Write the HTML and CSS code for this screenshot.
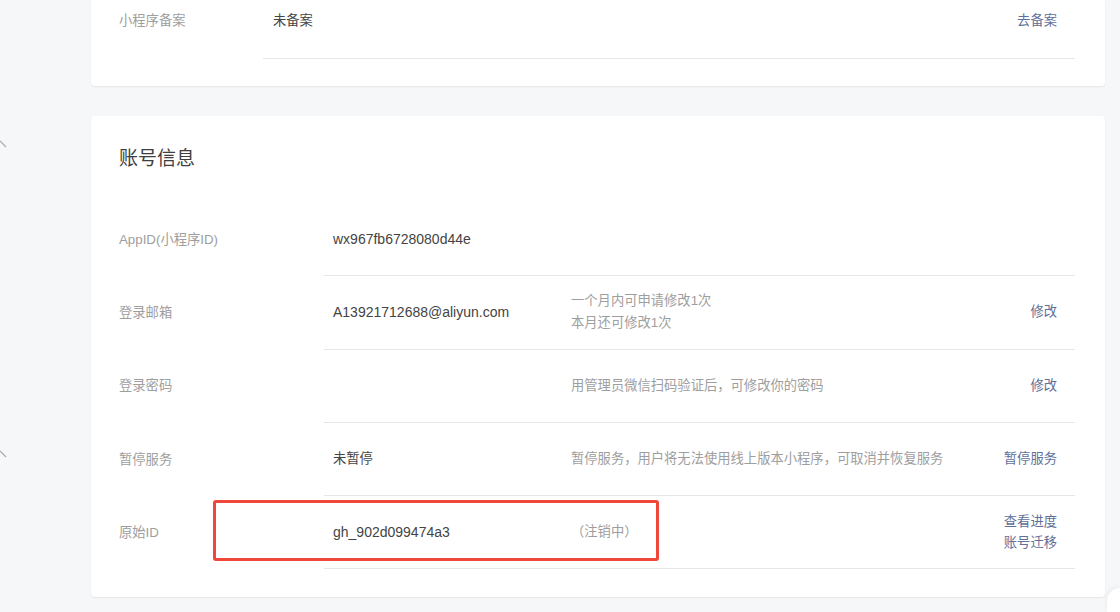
FILE: index.html
```html
<!DOCTYPE html>
<html lang="zh-CN">
<head>
<meta charset="utf-8">
<title>账号信息</title>
<link rel="stylesheet" href="styles.css">
</head>
<body>
<div class="page">
  <section class="card card-top">
    <div class="row">
      <div class="label label-narrow">小程序备案</div>
      <div class="content content-top">
        <div class="value value-cjk">未备案</div>
        <div class="desc"></div>
        <a class="action">去备案</a>
      </div>
    </div>
  </section>

  <section class="card card-main">
    <h2 class="title">账号信息</h2>
    <div class="row">
      <div class="label">AppID(小程序ID)</div>
      <div class="content">
        <div class="value">wx967fb6728080d44e</div>
        <div class="desc"></div>
        <div class="action"></div>
      </div>
    </div>
    <div class="row">
      <div class="label">登录邮箱</div>
      <div class="content">
        <div class="value">A13921712688@aliyun.com</div>
        <div class="desc">一个月内可申请修改1次<br>本月还可修改1次</div>
        <a class="action">修改</a>
      </div>
    </div>
    <div class="row">
      <div class="label">登录密码</div>
      <div class="content">
        <div class="value"></div>
        <div class="desc">用管理员微信扫码验证后，可修改你的密码</div>
        <a class="action">修改</a>
      </div>
    </div>
    <div class="row">
      <div class="label">暂停服务</div>
      <div class="content">
        <div class="value value-cjk">未暂停</div>
        <div class="desc">暂停服务，用户将无法使用线上版本小程序，可取消并恢复服务</div>
        <a class="action">暂停服务</a>
      </div>
    </div>
    <div class="row">
      <div class="label">原始ID</div>
      <div class="content">
        <div class="value">gh_902d099474a3</div>
        <div class="desc desc-status">（注销中）</div>
        <div class="action action-stack"><a>查看进度</a><a>账号迁移</a></div>
      </div>
    </div>
  </section>
</div>

<div class="highlight"></div>
<svg class="chev chev-1" width="8" height="10" viewBox="0 0 8 10"><path d="M0 1 L6 7" stroke="#a9abb0" stroke-width="1.2" fill="none"/></svg>
<svg class="chev chev-2" width="8" height="10" viewBox="0 0 8 10"><path d="M0 1 L6 7" stroke="#a9abb0" stroke-width="1.2" fill="none"/></svg>
<div class="float-btn"></div>
</body>
</html>
```

FILE: styles.css
```css
html, body {
  margin: 0;
  padding: 0;
}
body {
  width: 1120px;
  height: 612px;
  overflow: hidden;
  background: #f6f7f9;
  font-family: "Liberation Sans", "Noto Sans CJK SC", sans-serif;
  color: #353535;
  position: relative;
}
.page {
  padding-left: 91px;
  width: 1014px;
}
.card {
  background: #fff;
  border-radius: 4px;
  box-shadow: 0 1px 2px rgba(0, 0, 0, 0.07);
  box-sizing: border-box;
  width: 1014px;
  padding: 0 30px 0 28px;
}
.card-top {
  border-radius: 0 0 4px 4px;
  padding-bottom: 27px;
}
.card-main {
  margin-top: 30px;
  padding-top: 30px;
  padding-bottom: 28px;
}
.title {
  margin: 0 0 31px 0;
  font-size: 19px;
  line-height: 26px;
  font-weight: 400;
  color: #3e3e3e;
}
.row {
  display: flex;
  align-items: center;
}
.label {
  width: 205px;
  flex: none;
  font-size: 13.3px;
  line-height: 22px;
  color: #9e9e9e;
}
.label-narrow {
  width: 144px;
  align-self: flex-start;
  padding-top: 10px;
}
.content {
  flex: 1;
  display: flex;
  align-items: center;
  height: 72.3px;
  border-bottom: 1px solid #e7e7eb;
  padding: 0 18px 0 9px;
}
.content-top {
  height: auto;
  align-items: flex-start;
  padding: 10px 18px 26px 10px;
}
.value {
  width: 238px;
  flex: none;
  font-size: 14px;
  line-height: 22px;
  color: #444;
}
.value-cjk {
  font-size: 13.3px;
}
.content-top .value {
  flex: 1;
}
.desc {
  flex: 1;
  font-size: 13.3px;
  line-height: 22px;
  color: #9e9e9e;
}
.content-top .desc {
  display: none;
}
.action {
  flex: none;
  text-align: right;
  font-size: 13.3px;
  line-height: 22px;
  color: #5f6f99;
  cursor: pointer;
}
.action-stack {
  display: flex;
  flex-direction: column;
  line-height: 21px;
}
.highlight {
  position: absolute;
  left: 213px;
  top: 500px;
  width: 440px;
  height: 55px;
  border: 3px solid #f0473b;
  border-radius: 3px;
}
.chev {
  position: absolute;
  left: 0;
}
.chev-1 { top: 140px; }
.chev-2 { top: 450px; }
.float-btn {
  position: absolute;
  left: 1107px;
  top: 588px;
  width: 13px;
  height: 24px;
  border-top-left-radius: 16px;
  background: #fff;
  box-shadow: -1px -1px 4px rgba(0, 0, 0, 0.05);
}
```
